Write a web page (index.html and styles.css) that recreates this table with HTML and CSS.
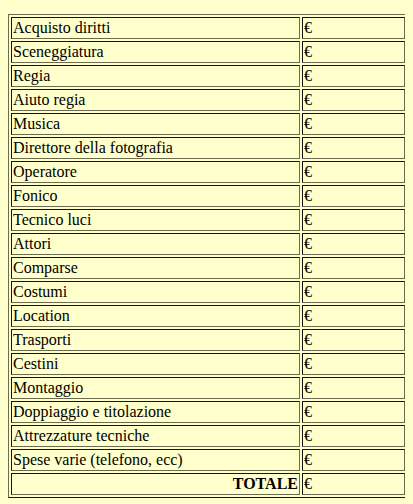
FILE: index.html
```html
<!DOCTYPE html>
<html lang="it">
<head>
<meta charset="utf-8">
<title>Preventivo</title>
<link rel="stylesheet" href="styles.css">
</head>
<body>
<table class="budget">
  <colgroup><col class="c-voce"><col class="c-importo"></colgroup>
  <tbody>
    <tr><td>Acquisto diritti</td><td>€</td></tr>
    <tr><td>Sceneggiatura</td><td>€</td></tr>
    <tr><td>Regia</td><td>€</td></tr>
    <tr><td>Aiuto regia</td><td>€</td></tr>
    <tr><td>Musica</td><td>€</td></tr>
    <tr><td>Direttore della fotografia</td><td>€</td></tr>
    <tr><td>Operatore</td><td>€</td></tr>
    <tr><td>Fonico</td><td>€</td></tr>
    <tr><td>Tecnico luci</td><td>€</td></tr>
    <tr><td>Attori</td><td>€</td></tr>
    <tr><td>Comparse</td><td>€</td></tr>
    <tr><td>Costumi</td><td>€</td></tr>
    <tr><td>Location</td><td>€</td></tr>
    <tr><td>Trasporti</td><td>€</td></tr>
    <tr><td>Cestini</td><td>€</td></tr>
    <tr><td>Montaggio</td><td>€</td></tr>
    <tr><td>Doppiaggio e titolazione</td><td>€</td></tr>
    <tr><td>Attrezzature tecniche</td><td>€</td></tr>
    <tr><td>Spese varie (telefono, ecc)</td><td>€</td></tr>
    <tr><td class="totale">TOTALE</td><td>€</td></tr>
  </tbody>
</table>
</body>
</html>
```
FILE: styles.css
```css
html, body {
  background: #ffffcc;
}
body {
  margin: 14px 8px 8px 8px;
  font-family: "Liberation Serif", "Times New Roman", serif;
  font-size: 16px;
  color: #000;
}
.budget {
  width: 400px;
  border: 1px outset #6b6b4f;
  border-spacing: 2px;
  table-layout: fixed;
}
.c-voce { width: 289px; }
.budget td {
  border: 1px inset #6b6b4f;
  padding: 1px;
  height: 18px;
  line-height: 18px;
  vertical-align: middle;
  white-space: nowrap;
}
.budget td.totale {
  text-align: right;
  font-weight: bold;
}
```
